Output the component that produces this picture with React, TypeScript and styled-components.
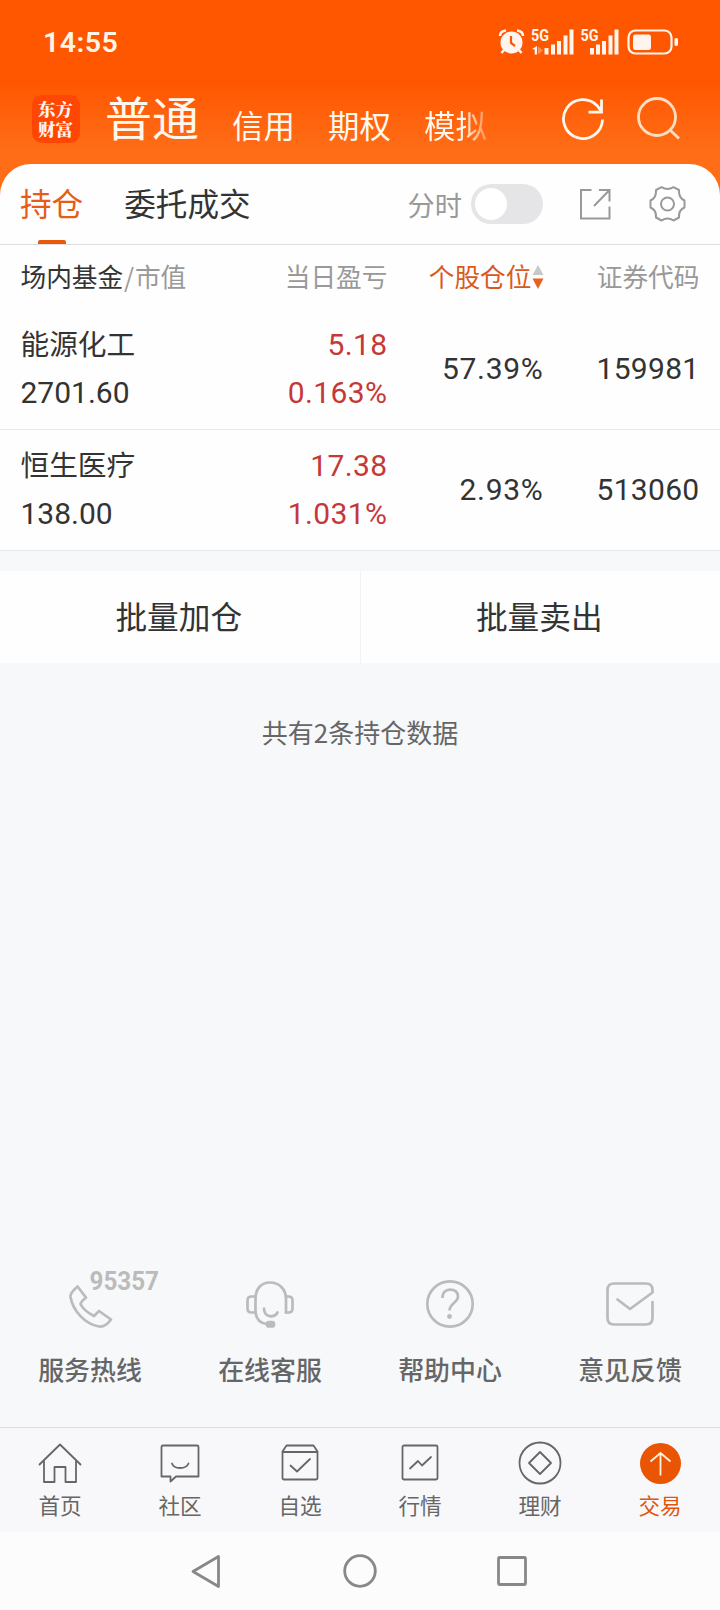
import React from "react";
import styled, { createGlobalStyle } from "styled-components";

const GlobalStyle = createGlobalStyle`
  * { box-sizing: border-box; }
  body { margin: 0; background: #f7f8fa; }
`;

const cjk = `"Noto Sans CJK SC", sans-serif`;
const numeric = `Roboto, "Noto Sans CJK SC", sans-serif`;

const Screen = styled.div`
  width: 720px;
  height: 1610px;
  display: flex;
  flex-direction: column;
  background: #f7f8fa;
  color: #333;
  font-family: ${cjk};
  white-space: nowrap;
  overflow: hidden;
`;

const Header = styled.header`
  height: 204px;
  flex: none;
  background: linear-gradient(#ff5600 0, #ff5600 80px, #ff6d17 150px, #ff6d17 100%);
  color: #fff5e8;
`;

const StatusBar = styled.div`
  height: 84px;
  display: flex;
  justify-content: space-between;
  padding: 0 40px 0 43px;
`;

const Clock = styled.div`
  font: 600 28.5px/86px ${numeric};
  letter-spacing: 0.5px;
`;

const StatusIcons = styled.svg`
  width: 182px;
  height: 30px;
  margin-top: 27px;
  text {
    font: 700 16.5px ${numeric};
  }
`;

const AccountNav = styled.nav`
  height: 70px;
  display: flex;
  align-items: center;
  padding-left: 32px;
`;

const Logo = styled.div`
  width: 48px;
  height: 48px;
  padding: 4px 5px 0 6px;
  border-radius: 10px;
  background: #ff4603;
  font: 900 17.5px/20px "Noto Serif CJK SC", ${cjk};
  white-space: normal;
  word-break: break-all;
  color: #fff5ee;
`;

const AccountTitle = styled.div`
  width: 95px;
  margin: -7px 0 0 25px;
  font-size: 47px;
  line-height: 70px;
  color: #fff8ee;
`;

const AccountLink = styled.div<{ $fade?: boolean }>`
  width: 64px;
  margin: 11px 0 0 32px;
  font-size: 31.4px;
  line-height: 44px;
  color: #fff8ee;
  ${(p) =>
    p.$fade &&
    `background: linear-gradient(90deg, #fff8ee 60%, rgba(255,248,238,.3) 98%);
     background-clip: text; color: transparent;`}
`;

const HeaderActions = styled.div`
  display: flex;
  gap: 32px;
  margin-left: 72.5px;
`;

const Panel = styled.section`
  flex: none;
  margin-top: -40px;
  border-radius: 31px 31px 0 0;
  background: #fefefe;
`;

const TabBar = styled.div`
  height: 81px;
  display: flex;
  align-items: center;
  padding-left: 20px;
  border-bottom: 1px solid #dedede;
`;

const Tab = styled.div<{ $active?: boolean }>`
  height: 80px;
  margin-right: 41px;
  font-size: 31.6px;
  line-height: 76px;
  color: ${(p) => (p.$active ? "#e55d18" : "#333")};
  &::after {
    content: "";
    display: ${(p) => (p.$active ? "block" : "none")};
    width: 28px;
    height: 4px;
    margin: 0 auto;
    border-radius: 2px 2px 0 0;
    background: #e8590c;
  }
`;

const TabTools = styled.div`
  display: flex;
  align-items: center;
  margin-left: auto;
  padding-right: 33px;
`;

const ToolLabel = styled.span`
  font-size: 27.2px;
  line-height: 40px;
  color: #999;
`;

const Switch = styled.div`
  width: 72px;
  height: 40px;
  margin: 0 35px 0 9px;
  padding: 4px;
  border-radius: 20px;
  background: #e5e5e7;
  &::before {
    content: "";
    display: block;
    width: 32px;
    height: 32px;
    border-radius: 50%;
    background: #fff;
  }
`;

const Columns = styled.div`
  display: grid;
  grid-template-columns: 200px 167px 156px 156px;
  align-items: center;
  padding-left: 20.5px;
`;

const TableHead = styled(Columns)`
  height: 64px;
  padding-bottom: 3px;
  font-size: 25.7px;
  color: #999;
`;

const HeadCell = styled.div<{ $right?: boolean; $active?: boolean }>`
  display: flex;
  align-items: center;
  justify-content: ${(p) => (p.$right ? "flex-end" : "flex-start")};
  color: ${(p) => (p.$active ? "#d9591c" : "inherit")};
  b {
    font-weight: 400;
    color: #333;
  }
  i {
    font-style: normal;
    padding: 0 0.8px;
  }
  svg {
    margin-top: 3px;
  }
`;

const Holding = styled(Columns)`
  height: 121px;
  border-bottom: 1px solid #e9e9ea;
`;

const Cell = styled.div<{ $right?: boolean; $red?: boolean; $spacing?: number }>`
  font: 400 30px/48px ${numeric};
  letter-spacing: ${(p) => p.$spacing ?? 0}px;
  text-align: ${(p) => (p.$right ? "right" : "left")};
  color: ${(p) => (p.$red ? "#c53838" : "#333")};
`;

const FundName = styled.div`
  padding-bottom: 4px;
  font: 400 28.7px/44px ${cjk};
`;

const BatchActions = styled.div`
  flex: none;
  height: 92px;
  margin-top: 20px;
  display: flex;
  align-items: center;
  background: #fefefe;
`;

const BatchButton = styled.button`
  flex: 1;
  height: 92px;
  padding: 0 2px 5px 0;
  border: 0;
  background: transparent;
  font: 400 31.7px/86px ${cjk};
  color: #333;
  & + & {
    border-left: 1px solid #f2f2f3;
  }
`;

const Summary = styled.p`
  margin: 49px 0 0;
  text-align: center;
  font-size: 26px;
  line-height: 40px;
  color: #666;
`;

const Services = styled.div`
  display: grid;
  grid-template-columns: repeat(4, 180px);
  height: 177px;
  margin-top: auto;
`;

const Service = styled.div`
  display: flex;
  flex-direction: column;
  align-items: center;
  font-size: 25.9px;
  font-weight: 500;
  line-height: 38px;
  color: #666;
`;

const ServiceIcon = styled.svg`
  width: 180px;
  height: 80px;
  margin-bottom: 20px;
  fill: none;
  stroke: #bbb;
  stroke-width: 2.7;
  stroke-linecap: round;
  stroke-linejoin: round;
  text {
    font: 700 25.5px Roboto, sans-serif;
    fill: #bbb;
    stroke: none;
  }
`;

const BottomTabs = styled.nav`
  flex: none;
  display: grid;
  grid-template-columns: repeat(6, 120px);
  height: 105px;
  border-top: 1px solid #dedee0;
  background: #f8f8fa;
`;

const BottomTab = styled.div<{ $active?: boolean }>`
  display: flex;
  flex-direction: column;
  align-items: center;
  padding-top: 11px;
  font-size: 21.6px;
  line-height: 32px;
  color: ${(p) => (p.$active ? "#e0550e" : "#666")};
  svg {
    width: 48px;
    height: 48px;
    margin-bottom: 2px;
    fill: none;
    stroke: #666;
    stroke-width: 1.8;
    stroke-linejoin: round;
    stroke-linecap: round;
  }
`;

const SystemNav = styled.div`
  flex: none;
  display: flex;
  justify-content: center;
  align-items: center;
  gap: 112px;
  height: 78px;
  background: #fcfcfc;
  svg {
    width: 40px;
    height: 40px;
    fill: none;
    stroke: #888;
    stroke-width: 2.8;
    stroke-linejoin: round;
  }
`;

const holdings = [
  { name: "能源化工", value: "2701.60", gain: "5.18", rate: "0.163%", weight: "57.39%", code: "159981" },
  { name: "恒生医疗", value: "138.00", gain: "17.38", rate: "1.031%", weight: "2.93%", code: "513060" },
];

const services = [
  {
    label: "服务热线",
    icon: (
      <>
        <path d="M77.5 36.5 86 47.5 C83 50 81 52 80.5 54 C83 59 88 63 94 66 L99 61 L111 69.5 C107 75 103 77 99 76.5 C85 74 73 61 70.5 47 C70 43 74 39.5 77.5 36.5Z" />
        <text x="89.5" y="40" textLength="69.5" lengthAdjust="spacingAndGlyphs">95357</text>
      </>
    ),
  },
  {
    label: "在线客服",
    icon: (
      <>
        <path d="M75.5 62.5V49 C75.5 39 81 32.5 90 32.5 S106 39 106 49V62.5" />
        <path d="M75 46.5H71.5Q67.5 46.5 67.5 50.5V58.5Q67.5 62.5 71.5 62.5H75.5C76.5 69 80.5 73.5 87 74" />
        <path d="M106 46.5H108.5Q112.5 46.5 112.5 50.5V58.5Q112.5 62.5 108.5 62.5H106" />
        <path d="M84 58.5C84.5 68 94.5 68 97.5 62.5" />
        <rect x="87" y="72" width="7" height="4.5" rx="2" fill="#bbb" />
      </>
    ),
  },
  {
    label: "帮助中心",
    icon: (
      <>
        <circle cx="90" cy="54" r="22.7" />
        <path d="M82.5 48C82 37 98 37 98 46.5C98 53 89.5 53 89.5 60.5" strokeLinecap="butt" />
        <circle cx="89.5" cy="66.5" r="2.4" fill="#bbb" stroke="none" />
      </>
    ),
  },
  {
    label: "意见反馈",
    icon: (
      <path d="M77.5 49.5 90 59 112.5 42.5V40Q112.5 33.5 106 33.5H74Q67.5 33.5 67.5 40V68Q67.5 74.5 74 74.5H106Q112.5 74.5 112.5 68V52" />
    ),
  },
];

const bottomTabs = [
  { label: "首页", icon: <path d="M3.5 25.5 24 5.5 44.5 25.5M8 22V43H18.5V28H29.5V43H40V22" /> },
  {
    label: "社区",
    icon: (
      <>
        <path d="M7 6.5H41Q42.5 6.5 42.5 8V37.5H20L14.5 42.5V37.5H5.5V8Q5.5 6.5 7 6.5Z" />
        <path d="M16 24.5C18 30.5 30 30.5 32.5 24.5" />
      </>
    ),
  },
  {
    label: "自选",
    icon: (
      <>
        <path d="M10.5 6.5H37.5L41.500 12.5V39Q41.500 40.5 40 40.5H8Q6.5 40.5 6.5 39V12.5Z M6.5 13H41.5" />
        <path d="M14.5 26.5 21 32.5 34 20" />
      </>
    ),
  },
  {
    label: "行情",
    icon: (
      <>
        <rect x="6.5" y="6.5" width="35" height="34" rx="1.5" />
        <path d="M14 29.5 22 22 26 26.5 35 18" />
      </>
    ),
  },
  {
    label: "理财",
    icon: (
      <>
        <circle cx="24" cy="24" r="20.5" />
        <path d="M24 13 35 24 24 35 13 24Z" />
      </>
    ),
  },
  {
    label: "交易",
    active: true,
    icon: (
      <>
        <circle cx="24.5" cy="24.5" r="20.5" fill="#ea5504" stroke="none" />
        <path d="M24.5 36.5V14M14.5 22.5 24.5 14 34.5 22.5" stroke="#fff3df" strokeLinecap="butt" />
      </>
    ),
  },
];

export default function App() {
  return (
    <Screen>
      <GlobalStyle />
      <Header>
        <StatusBar>
          <Clock>14:55</Clock>
          <StatusIcons viewBox="0 0 182 30" fill="#fff5ee">
            <circle cx="13.5" cy="15.5" r="11" />
            <path d="M2 9Q2 4 8 3.5M25 9Q25 4 19 3.5M6 23 3.5 26M21 23 23.5 26" stroke="#fff5ee" strokeWidth="2.6" fill="none" />
            <path d="M13 9V16L17 19" stroke="#ff5600" strokeWidth="2.2" fill="none" />
            <text x="33" y="14" textLength="18" lengthAdjust="spacingAndGlyphs">5G</text>
            <path d="M34 22 39 19V27.5H36.7V22.5Z" />
            <path d="M40 19.5 45 23.5 40 27.5Z" opacity=".35" />
            <path d="M46.5 21h4v6.5h-4zM53 17.5h4v10h-4zM59 14h4v13.5h-4zM65.5 8.5h4v19h-4zM71.5 2.5h4v25h-4z" />
            <text x="82.5" y="14" textLength="18" lengthAdjust="spacingAndGlyphs">5G</text>
            <path d="M92 21h4v6.5h-4zM98 17.5h4v10h-4zM104 14h4v13.5h-4zM110.5 8.5h4v19h-4zM116.5 2.5h4v25h-4z" />
            <rect x="130.5" y="3.5" width="43" height="23" rx="7" fill="none" stroke="#fff5ee" strokeWidth="2.2" />
            <rect x="135" y="7.5" width="18" height="15.5" rx="2.5" />
            <rect x="176.5" y="11" width="3.5" height="8" rx="1.5" />
          </StatusIcons>
        </StatusBar>
        <AccountNav>
          <Logo>东方财富</Logo>
          <AccountTitle>普通</AccountTitle>
          <AccountLink>信用</AccountLink>
          <AccountLink>期权</AccountLink>
          <AccountLink $fade>模拟</AccountLink>
          <HeaderActions>
            <svg width="44" height="44" viewBox="0 0 44 44" fill="none" stroke="#fff8ee" strokeWidth="2.8">
              <path d="M41.5 22.5A19.5 19.5 0 1 1 36.5 9L40 14M40.5 2.5V15.2H27.5" />
            </svg>
            <svg width="44" height="44" viewBox="0 0 44 44" fill="none" stroke="#ffdfc3" strokeWidth="2.8">
              <circle cx="20" cy="20" r="18.5" />
              <path d="M33 33 42 41.5" />
            </svg>
          </HeaderActions>
        </AccountNav>
      </Header>

      <Panel>
        <TabBar>
          <Tab $active>持仓</Tab>
          <Tab>委托成交</Tab>
          <TabTools>
            <ToolLabel>分时</ToolLabel>
            <Switch />
            <svg width="34" height="34" viewBox="0 0 34 34" fill="none" stroke="#999" strokeWidth="2">
              <path d="M13.5 3H3V31.5H31.5V19.5M21 3H31.5V14.5M31.5 3 16 19" />
            </svg>
            <svg width="75" height="38" viewBox="-37 0 75 38" fill="none" stroke="#999" strokeWidth="2" strokeLinejoin="round">
              <path d="M12.5 2.2Q18.500 6 24.5 2.2L30 5Q29.5 13 35.500 15.5V22.5Q29.5 25 30 32.5L24.5 35.5Q18.5 31.5 12.5 35.5L7 32.5Q7.500 25 1.5 22.5V15.5Q7.500 13 7 5Z" />
              <circle cx="18.5" cy="19" r="6.5" />
            </svg>
          </TabTools>
        </TabBar>

        <TableHead>
          <HeadCell>
            <b>场内基金</b>
            <i>/</i>市值
          </HeadCell>
          <HeadCell $right>当日盈亏</HeadCell>
          <HeadCell $right $active>
            个股仓位
            <svg width="12" height="26" viewBox="0 0 12 26">
              <path d="M6 1 11.5 11H.5Z" fill="#c8c8c8" />
              <path d="M6 25 11.5 14.5H.5Z" fill="#e8611f" />
            </svg>
          </HeadCell>
          <HeadCell $right>证券代码</HeadCell>
        </TableHead>

        {holdings.map((h) => (
          <Holding key={h.code}>
            <Cell>
              <FundName>{h.name}</FundName>
              {h.value}
            </Cell>
            <Cell $right $red $spacing={0.4}>
              {h.gain}
              <br />
              {h.rate}
            </Cell>
            <Cell $right $spacing={0.7}>{h.weight}</Cell>
            <Cell $right $spacing={0.3}>{h.code}</Cell>
          </Holding>
        ))}
      </Panel>

      <BatchActions>
        <BatchButton>批量加仓</BatchButton>
        <BatchButton>批量卖出</BatchButton>
      </BatchActions>
      <Summary>共有2条持仓数据</Summary>

      <Services>
        {services.map((s) => (
          <Service key={s.label}>
            <ServiceIcon viewBox="0 0 180 80">{s.icon}</ServiceIcon>
            {s.label}
          </Service>
        ))}
      </Services>

      <BottomTabs>
        {bottomTabs.map((t) => (
          <BottomTab key={t.label} $active={t.active}>
            <svg viewBox="0 0 48 48">{t.icon}</svg>
            {t.label}
          </BottomTab>
        ))}
      </BottomTabs>

      <SystemNav>
        <svg viewBox="0 0 40 40">
          <path d="M30.5 5.5V35.5L5 20.5Z" />
        </svg>
        <svg viewBox="0 0 40 40">
          <circle cx="20" cy="20" r="15.3" />
        </svg>
        <svg viewBox="0 0 40 40">
          <rect x="6.5" y="6.5" width="27" height="27" rx="1" />
        </svg>
      </SystemNav>
    </Screen>
  );
}
